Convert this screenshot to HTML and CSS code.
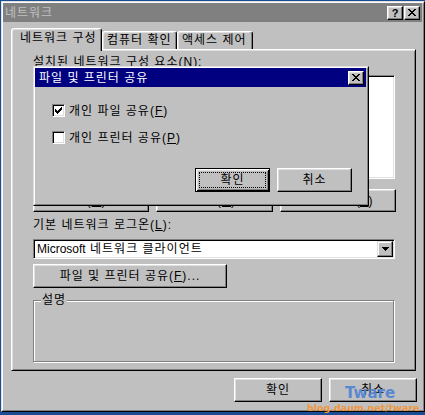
FILE: index.html
```html
<!DOCTYPE html>
<html lang="ko">
<head>
<meta charset="utf-8">
<title>네트워크</title>
<link rel="stylesheet" href="styles.css">
</head>
<body>
<div class="window">
  <div class="window-inner">
    <div class="titlebar inactive">
      <span class="title-text">네트워크</span>
      <div class="title-buttons">
        <span class="cap-btn help">?</span>
        <span class="cap-btn"><svg width="8" height="7" viewBox="0 0 8 7" shape-rendering="crispEdges"><path d="M0 0h2v1h-2zM6 0h2v1h-2zM1 1h2v1h-2zM5 1h2v1h-2zM2 2h4v1h-4zM3 3h2v1h-2zM2 4h4v1h-4zM1 5h2v1h-2zM5 5h2v1h-2zM0 6h2v1h-2zM6 6h2v1h-2z"/></svg></span>
      </div>
    </div>
    <div class="dialog-body">
      <div class="tabs">
        <div class="tab selected">네트워크 구성</div>
        <div class="tab tab-2">컴퓨터 확인</div>
        <div class="tab tab-3">액세스 제어</div>
      </div>
      <div class="panel">
        <div class="label">설치된 네트워크 구성 요소(<u>N</u>):</div>
        <div class="listbox"></div>
        <div class="button-row">
          <div class="btn">추가(<u>D</u>)...</div>
          <div class="btn">제거(<u>E</u>)</div>
          <div class="btn">등록 정보<span class="latin">(<u>R</u>)</span></div>
        </div>
        <div class="label label-logon">기본 네트워크 로그온(<u>L</u>):</div>
        <div class="combo">
          <span class="combo-text"><span class="latin">Microsoft</span> 네트워크 클라이언트</span>
          <span class="combo-drop"><svg width="7" height="4" viewBox="0 0 7 4" shape-rendering="crispEdges"><path d="M0 0h7v1h-7zM1 1h5v1h-5zM2 2h3v1h-3zM3 3h1v1h-1z"/></svg></span>
        </div>
        <div class="btn share-btn">파일 및 프린터 공유(<u>F</u>)...</div>
        <div class="group"><span class="group-label">설명</span></div>
      </div>
      <div class="footer">
        <div class="btn footer-btn">확인</div>
        <div class="btn footer-btn">취소</div>
      </div>
    </div>
  </div>
</div>

<div class="popup">
  <div class="popup-inner">
    <div class="titlebar active">
      <span class="title-text">파일 및 프린터 공유</span>
      <div class="title-buttons">
        <span class="cap-btn"><svg width="8" height="7" viewBox="0 0 8 7" shape-rendering="crispEdges"><path d="M0 0h2v1h-2zM6 0h2v1h-2zM1 1h2v1h-2zM5 1h2v1h-2zM2 2h4v1h-4zM3 3h2v1h-2zM2 4h4v1h-4zM1 5h2v1h-2zM5 5h2v1h-2zM0 6h2v1h-2zM6 6h2v1h-2z"/></svg></span>
      </div>
    </div>
    <div class="popup-body">
      <div class="check-row">
        <span class="checkbox"><svg width="7" height="7" viewBox="0 0 7 7" shape-rendering="crispEdges"><path d="M6 0h1v1h-1zM5 1h2v1h-2zM0 2h1v1h-1zM4 2h3v1h-3zM0 3h2v1h-2zM3 3h3v1h-3zM0 4h5v1h-5zM1 5h3v1h-3zM2 6h1v1h-1z"/></svg></span>
        <span class="check-label">개인 파일 공유(<u>F</u>)</span>
      </div>
      <div class="check-row">
        <span class="checkbox"></span>
        <span class="check-label">개인 프린터 공유(<u>P</u>)</span>
      </div>
      <div class="popup-buttons">
        <div class="btn popup-btn default"><span class="focus">확인</span></div>
        <div class="btn popup-btn">취소</div>
      </div>
    </div>
  </div>
</div>

<div class="watermark-title">Tware</div>
<div class="watermark-url">blog.daum.net/tware</div>
</body>
</html>
```

FILE: styles.css
```css
* { box-sizing: border-box; }
html, body { margin: 0; padding: 0; }
body {
  width: 425px;
  height: 415px;
  overflow: hidden;
  position: relative;
  background: #1b4d94;
  font-family: "Liberation Sans", "Noto Sans CJK KR", sans-serif;
  font-size: 12px;
  line-height: 14px;
  color: #000;
  letter-spacing: 1px;
  word-spacing: 0;
}
u { text-decoration: underline; text-underline-offset: 1px; }
.latin { letter-spacing: 0; }

/* main window */
.window {
  margin: 1px 0 0 1px;
  width: 424px;
  height: 411px;
  background: #c0c0c0;
  border: 1px solid;
  border-color: #dfdfdf #000 #000 #dfdfdf;
}
.window-inner {
  height: 100%;
  border: 1px solid;
  border-color: #fff #808080 #808080 #fff;
  padding: 0 1px 1px 0;
  display: flex;
  flex-direction: column;
}
.titlebar {
  height: 19px;
  flex: none;
  display: flex;
  align-items: center;
  justify-content: space-between;
  padding-left: 2px;
}
.titlebar.inactive { background: #808080; color: #c0c0c0; }
.titlebar.active { background: #000080; color: #fff; padding-left: 4px; }
.title-text { line-height: 14px; white-space: nowrap; }
.title-buttons { display: flex; gap: 1px; padding-right: 2px; }
.cap-btn {
  width: 16px;
  height: 14px;
  background: #c0c0c0;
  color: #000;
  border: 1px solid;
  border-color: #fff #000 #000 #fff;
  box-shadow: inset -1px -1px #808080, inset 1px 1px #dfdfdf;
  display: flex;
  align-items: center;
  justify-content: center;
  letter-spacing: 0;
}
.cap-btn.help {
  font: bold 11px/12px "Liberation Sans", sans-serif;
  padding-top: 1px;
}

.dialog-body {
  flex: 1;
  padding: 6px 0 0 8px;
  display: flex;
  flex-direction: column;
}

/* tabs */
.tabs { display: flex; align-items: flex-end; height: 21px; }
.tab {
  height: 18px;
  background: #c0c0c0;
  border: 1px solid;
  border-bottom: 0;
  border-color: #fff #000 transparent #fff;
  border-radius: 3px 3px 0 0;
  box-shadow: inset -1px 0 #808080, inset 1px 1px #dfdfdf;
  padding: 1px 0 0 4px;
  white-space: nowrap;
  overflow: hidden;
}
.tab.selected {
  width: 91px;
  height: 23px;
  margin-bottom: -2px;
  padding: 2px 0 0 8px;
  position: relative;
  z-index: 1;
}
.tab-2 { width: 75px; }
.tab-3 { width: 76px; }

/* panel */
.panel {
  width: 405px;
  height: 322px;
  flex: none;
  border: 1px solid;
  border-color: #fff #000 #000 #fff;
  box-shadow: inset 1px 1px #dfdfdf, inset -1px -1px #808080;
  padding: 5px 20px 0 21px;
  display: flex;
  flex-direction: column;
}
.label { height: 14px; white-space: nowrap; }
.label-logon { margin-top: 6px; }

.listbox, .combo, .checkbox {
  background: #fff;
  border: 1px solid;
  border-color: #808080 #fff #fff #808080;
  box-shadow: inset 1px 1px #000, inset -1px -1px #dfdfdf;
}
.listbox { margin-top: 6px; height: 104px; flex: none; }

.btn {
  background: #c0c0c0;
  border: 1px solid;
  border-color: #fff #000 #000 #fff;
  box-shadow: inset -1px -1px #808080, inset 1px 1px #dfdfdf;
  display: flex;
  align-items: center;
  justify-content: center;
  white-space: nowrap;
  overflow: hidden;
}
.button-row {
  margin-top: 10px;
  height: 23px;
  flex: none;
  display: grid;
  grid-template-columns: 116px 117px 116px;
  gap: 7px;
}

.combo {
  margin-top: 7px;
  height: 20px;
  flex: none;
  display: flex;
  align-items: center;
  justify-content: space-between;
  padding: 1px 1px 1px 3px;
}
.combo-text { white-space: nowrap; }
.combo-drop {
  width: 16px;
  height: 16px;
  background: #c0c0c0;
  border: 1px solid;
  border-color: #dfdfdf #000 #000 #dfdfdf;
  box-shadow: inset -1px -1px #808080, inset 1px 1px #fff;
  display: flex;
  align-items: center;
  justify-content: center;
  padding-left: 1px;
}

.share-btn { margin-top: 5px; width: 194px; height: 24px; flex: none; }

.group {
  margin-top: 12px;
  height: 62px;
  width: 361px;
  flex: none;
  position: relative;
  border: 1px solid #808080;
  box-shadow: inset 1px 1px #fff, 1px 1px #fff;
}
.group-label {
  position: absolute;
  left: 7px;
  top: -8px;
  padding: 0 1px 0 1px;
  background: #c0c0c0;
  line-height: 14px;
}

.footer {
  margin-top: 7px;
  display: flex;
  justify-content: flex-end;
  gap: 7px;
  padding-right: 5px;
}
.footer-btn { width: 88px; height: 24px; }

/* popup dialog, modal over the main window */
.popup {
  position: absolute;
  left: 33px;
  top: 66px;
  width: 336px;
  height: 140px;
  background: #c0c0c0;
  border: 1px solid;
  border-color: #dfdfdf #000 #000 #dfdfdf;
}
.popup-inner {
  height: 100%;
  border: 1px solid;
  border-color: #fff #808080 #808080 #fff;
  padding: 0 1px 1px 0;
  display: flex;
  flex-direction: column;
}
.popup-body {
  padding: 17px 14px 0 17px;
  display: flex;
  flex-direction: column;
}
.check-row { display: flex; align-items: center; gap: 4px; height: 13px; }
.check-row + .check-row { margin-top: 14px; }
.checkbox {
  width: 13px;
  height: 13px;
  flex: none;
  display: flex;
  align-items: center;
  justify-content: center;
}
.check-label { white-space: nowrap; line-height: 14px; }
.popup-buttons {
  margin-top: 24px;
  display: flex;
  justify-content: flex-end;
  gap: 7px;
}
.popup-btn { width: 75px; height: 24px; }
.popup-btn.default {
  position: relative;
  border: 1px solid #000;
  box-shadow: inset 1px 1px #fff, inset -1px -1px #000, inset 2px 2px #dfdfdf, inset -2px -2px #808080;
}
.popup-btn.default .focus {
  position: absolute;
  inset: 3px;
  border: 1px dotted #000;
  display: flex;
  align-items: center;
  justify-content: center;
}

/* blog watermark stamped over the screenshot */
.watermark-title {
  position: absolute;
  left: 345px;
  top: 384px;
  font: bold 15px/18px "DejaVu Sans", sans-serif;
  letter-spacing: 0;
  color: #4f82d2;
  opacity: 0.9;
}
.watermark-url {
  position: absolute;
  left: 307px;
  top: 402px;
  font: bold 9.5px/12px "DejaVu Sans", sans-serif;
  letter-spacing: 0;
  color: #f0963c;
}
```
